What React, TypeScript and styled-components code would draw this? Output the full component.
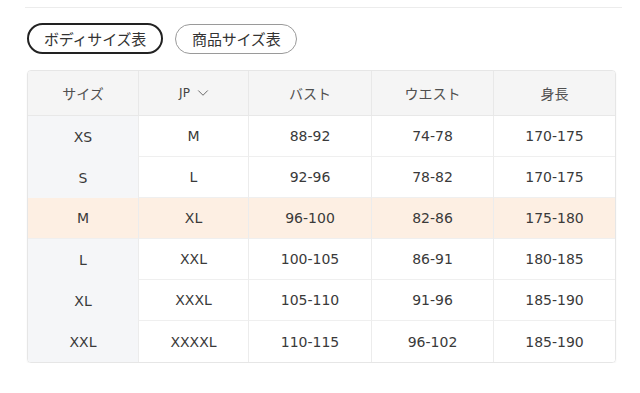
import React from 'react'
import styled, { createGlobalStyle } from 'styled-components'
import { ChevronDown } from 'lucide-react'

const GlobalStyle = createGlobalStyle`
  body {
    margin: 0;
    background: #ffffff;
    font-family: "DejaVu Sans", "Noto Sans CJK JP", sans-serif;
    color: #333333;
  }
`

const Page = styled.div`
  width: 597px;
  padding: 7px 0 0 25px;
`

const Divider = styled.div`
  height: 1px;
  background: #ececec;
`

const TabRow = styled.div`
  display: flex;
  align-items: center;
  gap: 12px;
  margin: 15px 0 0 2px;
`

const Pill = styled.button<{ $active?: boolean }>`
  box-sizing: border-box;
  height: ${p => (p.$active ? 31 : 30)}px;
  padding: 0 ${p => (p.$active ? 15 : 16)}px;
  border: ${p => (p.$active ? '2px solid #222222' : '1px solid #9a9a9a')};
  border-radius: 16px;
  background: #ffffff;
  font-family: "Noto Sans CJK JP", sans-serif;
  font-size: 15px;
  color: #333333;
  line-height: 1;
  letter-spacing: -0.2px;
`

const Table = styled.div`
  display: grid;
  grid-template-columns: 110px 110px 123px 122px 1fr;
  width: 589px;
  margin: 16px 0 0 2px;
  border: 1px solid #e6e6e6;
  border-radius: 4px;
  overflow: hidden;
  box-shadow: 0 1px 2px rgba(0, 0, 0, 0.06);
  box-sizing: border-box;
`

const HeadCell = styled.div<{ $first?: boolean }>`
  height: 45px;
  display: flex;
  align-items: center;
  justify-content: center;
  gap: 8px;
  background: #f5f5f5;
  border-left: ${p => (p.$first ? 'none' : '1px solid #e8e8e8')};
  border-bottom: 1px solid #e8e8e8;
  box-sizing: border-box;
  font-family: "Noto Sans CJK JP", sans-serif;
  font-size: 14px;
  color: #505050;
`

const Small = styled.span`
  font-family: "DejaVu Sans", sans-serif;
  font-size: 12px;
  color: #444444;
`

const Cell = styled.div<{ $first?: boolean; $hl?: boolean; $last?: boolean }>`
  height: 41px;
  display: flex;
  align-items: center;
  justify-content: center;
  box-sizing: border-box;
  font-size: 14px;
  color: #3a3a3a;
  background: ${p => (p.$hl ? '#fdefe3' : p.$first ? '#f5f6f8' : '#ffffff')};
  border-left: ${p => (p.$first ? 'none' : '1px solid #ececec')};
  border-bottom: ${p => (p.$last || (p.$first && !p.$hl) ? 'none' : '1px solid #efefef')};
`

const rows = [
  ['XS', 'M', '88-92', '74-78', '170-175'],
  ['S', 'L', '92-96', '78-82', '170-175'],
  ['M', 'XL', '96-100', '82-86', '175-180'],
  ['L', 'XXL', '100-105', '86-91', '180-185'],
  ['XL', 'XXXL', '105-110', '91-96', '185-190'],
  ['XXL', 'XXXXL', '110-115', '96-102', '185-190'],
]

const App: React.FC<{}> = () => {
  return (
    <Page>
      <GlobalStyle />
      <Divider />
      <TabRow>
        <Pill $active>ボディサイズ表</Pill>
        <Pill>商品サイズ表</Pill>
      </TabRow>
      <Table>
        <HeadCell $first>サイズ</HeadCell>
        <HeadCell>
          <Small>JP</Small>
          <ChevronDown size={18} strokeWidth={1.3} color="#666666" style={{ margin: '0 -4px' }} />
        </HeadCell>
        <HeadCell>バスト</HeadCell>
        <HeadCell>ウエスト</HeadCell>
        <HeadCell>身長</HeadCell>
        {rows.map((r, i) =>
          r.map((v, j) => (
            <Cell
              key={`${i}-${j}`}
              $first={j === 0}
              $hl={r[0] === 'M'}
              $last={i === rows.length - 1}
            >
              {v}
            </Cell>
          ))
        )}
      </Table>
    </Page>
  )
}

export default App
